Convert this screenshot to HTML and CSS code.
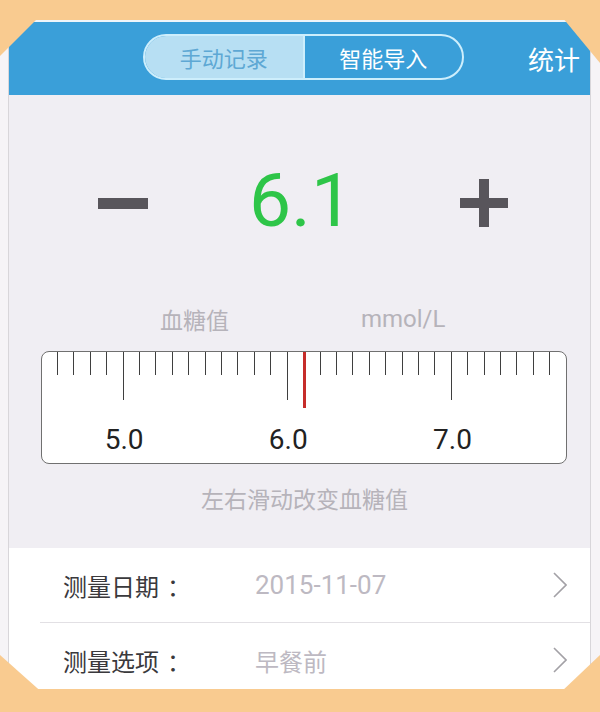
FILE: index.html
```html
<!DOCTYPE html>
<html lang="zh-CN">
<head>
<meta charset="utf-8">
<title>血糖记录</title>
<link rel="stylesheet" href="styles.css">
</head>
<body>
<div class="band-top"></div>
<div class="screen">
  <header class="topbar">
    <div class="seg">
      <span class="seg-item active">手动记录</span>
      <span class="seg-item">智能导入</span>
    </div>
    <span class="stats">统计</span>
  </header>
  <section class="main">
    <div class="adjust">
      <svg class="minus" width="50" height="11" viewBox="0 0 50 11"><rect x="0" y="0" width="50" height="11" fill="#58555b"/></svg>
      <span class="reading">6.1</span>
      <svg class="plus" width="48" height="48" viewBox="0 0 48 48"><rect x="0" y="19" width="48" height="10" fill="#58555b"/><rect x="19" y="0" width="10" height="48" fill="#58555b"/></svg>
    </div>
    <div class="labels"><span class="lab-cn">血糖值</span><span class="lab-unit">mmol/L</span></div>
    <div class="ruler">
      <div class="ticks">
        <span class="tick"></span><span class="tick"></span><span class="tick"></span><span class="tick"></span><span class="tick major"></span>
        <span class="tick"></span><span class="tick"></span><span class="tick"></span><span class="tick"></span><span class="tick"></span>
        <span class="tick"></span><span class="tick"></span><span class="tick"></span><span class="tick"></span><span class="tick major"></span>
        <span class="tick"></span><span class="tick"></span><span class="tick"></span><span class="tick"></span><span class="tick"></span>
        <span class="tick"></span><span class="tick"></span><span class="tick"></span><span class="tick"></span><span class="tick major"></span>
        <span class="tick"></span><span class="tick"></span><span class="tick"></span><span class="tick"></span><span class="tick"></span>
        <span class="tick"></span>
      </div>
      <div class="marks"><span>5.0</span><span>6.0</span><span>7.0</span></div>
      <span class="needle"></span>
    </div>
    <p class="hint">左右滑动改变血糖值</p>
  </section>
  <ul class="list">
    <li class="row">
      <span class="row-label">测量日期<span class="colon">：</span></span>
      <span class="row-value num">2015-11-07</span>
      <svg class="chev" width="14" height="26" viewBox="0 0 14 26"><polyline points="1,1 13,13 1,25" fill="none" stroke="#a3a1a6" stroke-width="1.6"/></svg>
    </li>
    <li class="row">
      <span class="row-label">测量选项<span class="colon">：</span></span>
      <span class="row-value">早餐前</span>
      <svg class="chev" width="14" height="26" viewBox="0 0 14 26"><polyline points="1,1 13,13 1,25" fill="none" stroke="#a3a1a6" stroke-width="1.6"/></svg>
    </li>
  </ul>
</div>
<div class="band-bottom"></div>
<svg class="corner corner-tl" width="56" height="56" viewBox="0 0 56 56"><polygon points="0,0 56,0 0,56" fill="#f9cb90"/></svg>
<svg class="corner corner-tr" width="52" height="63" viewBox="0 0 52 63"><polygon points="0,0 52,0 52,63" fill="#f9cb90"/></svg>
<svg class="corner corner-bl" width="64" height="57" viewBox="0 0 64 57"><polygon points="0,0 64,57 0,57" fill="#f9cb90"/></svg>
<svg class="corner corner-br" width="60" height="57" viewBox="0 0 60 57"><polygon points="60,0 60,57 0,57" fill="#f9cb90"/></svg>
</body>
</html>
```
FILE: styles.css
```css
* { box-sizing: border-box; }
html, body { margin: 0; padding: 0; }
body {
  width: 600px;
  height: 712px;
  overflow: hidden;
  position: relative;
  background: #f6f4f7;
  font-family: "Noto Sans CJK SC", "Noto Sans", sans-serif;
}
.band-top { height: 20px; background: #f9cb90; }
.band-bottom { height: 23px; background: #f9cb90; }
.screen {
  margin-left: 8px;
  width: 583px;
  height: 669px;
  overflow: hidden;
  border-top: 2px solid #eef5fa;
  border-left: 1px solid #d8d6da;
  border-right: 1px solid #d8d6da;
  background: #f0eef3;
}
.topbar {
  height: 73px;
  background: #3a9fd9;
  display: flex;
  align-items: center;
  padding-left: 134px;
  padding-right: 10px;
}
.seg {
  display: flex;
  width: 321px;
  height: 46px;
  border: 2px solid #cdeefc;
  border-radius: 23px;
  overflow: hidden;
  margin-top: -4px;
}
.seg-item {
  flex: 1;
  display: flex;
  align-items: center;
  justify-content: center;
  color: #ffffff;
  font-size: 22px;
}
.seg-item.active {
  background: #b7dff3;
  color: #5ea8d4;
  border-right: 2px solid #cdeefc;
}
.stats {
  margin-left: auto;
  color: #ffffff;
  font-size: 26px;
}
.main { padding-top: 58px; padding-bottom: 35px; }
.adjust {
  height: 100px;
  display: grid;
  grid-template-columns: 89px 50px 1fr 48px 82px;
  align-items: center;
}
.minus { grid-column: 2; display: block; }
.reading {
  grid-column: 3;
  justify-self: center;
  margin-right: 6px;
  font-family: Roboto, "Noto Sans", sans-serif;
  font-size: 75px;
  color: #2ec548;
  line-height: 1;
  margin-top: -6px;
}
.plus { grid-column: 4; display: block; }
.labels {
  margin-top: 49px;
  height: 30px;
  display: grid;
  grid-template-columns: 201px auto;
  padding-left: 151px;
  align-items: center;
  color: #b6b3ba;
  font-size: 23px;
}
.lab-unit { font-family: Roboto, "Noto Sans", sans-serif; font-size: 24px; }
.ruler {
  position: relative;
  margin: 19px 23px 0 32px;
  height: 113px;
  background: #ffffff;
  border: 1.5px solid #707070;
  border-radius: 8px;
  overflow: hidden;
}
.ticks {
  display: flex;
  align-items: flex-start;
  height: 48px;
  padding-left: 15px;
}
.tick {
  flex: none;
  width: 16.42px;
  height: 23px;
  border-left: 1.6px solid #3f3f3f;
}
.tick.major { height: 48px; }
.marks {
  display: flex;
  margin-top: 24px;
}
.marks span {
  flex: none;
  width: 164.2px;
  text-align: center;
  font-family: Roboto, "Noto Sans", sans-serif;
  font-size: 28px;
  line-height: 32px;
  color: #222222;
}
.needle {
  position: absolute;
  left: 261px;
  top: 0;
  width: 2.5px;
  height: 56px;
  background: #c62d2a;
}
.hint {
  margin: 19px 0 0;
  height: 30px;
  line-height: 30px;
  text-align: center;
  padding-left: 10px;
  color: #b6b3ba;
  font-size: 23px;
}
.list {
  list-style: none;
  margin: 0;
  padding: 0;
  background: #ffffff;
}
.row {
  margin-left: 31px;
  padding-left: 23px;
  padding-right: 23px;
  height: 75px;
  display: grid;
  grid-template-columns: 192px 1fr auto;
  align-items: center;
  border-bottom: 1px solid #e2e0e4;
}
.row-label { color: #3a393c; font-size: 24px; }
.colon { margin-left: 8px; }
.row-value { color: #bdb9c2; font-size: 24px; }
.row-value.num { font-family: Roboto, "Noto Sans", sans-serif; font-size: 26px; }
.chev { display: block; }
.corner { position: absolute; display: block; }
.corner-tl { left: 0; top: 0; }
.corner-tr { right: 0; top: 0; }
.corner-bl { left: 0; bottom: 0; }
.corner-br { right: 0; bottom: 0; }
```
